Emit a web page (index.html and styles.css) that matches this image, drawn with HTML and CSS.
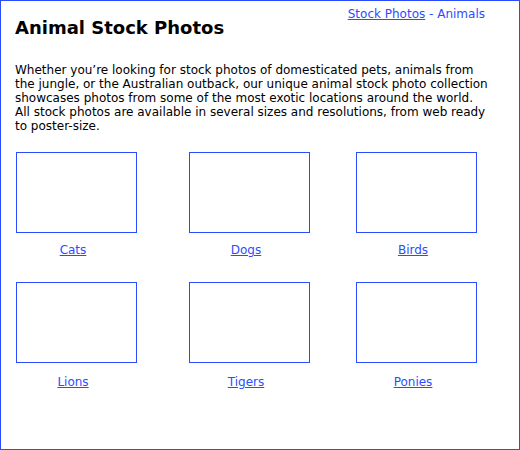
FILE: index.html
```html
<!DOCTYPE html>
<html lang="en">
<head>
  <meta charset="UTF-8" />
  <title>Animal Stock Photos</title>
  <link rel="stylesheet" href="styles.css">
</head>
<body>
  <div class="page">
    <div class="header">
      <h1>Animal Stock Photos</h1>
      <div class="crumbs"><a href="#">Stock Photos</a> - Animals</div>
    </div>

    <p class="intro">Whether you&rsquo;re looking for stock photos of domesticated pets, animals from the jungle, or the Australian outback, our unique animal stock photo collection showcases photos from some of the most exotic locations around the world. All stock photos are available in several sizes and resolutions, from web ready to poster-size.</p>

    <div class="gallery">
      <div class="item"><div class="thumb"></div><a href="#">Cats</a></div>
      <div class="item"><div class="thumb"></div><a href="#">Dogs</a></div>
      <div class="item"><div class="thumb"></div><a href="#">Birds</a></div>
      <div class="item lower"><div class="thumb"></div><a href="#">Lions</a></div>
      <div class="item lower"><div class="thumb"></div><a href="#">Tigers</a></div>
      <div class="item lower"><div class="thumb"></div><a href="#">Ponies</a></div>
    </div>
  </div>
</body>
</html>
```

FILE: styles.css
```css
:root {
  --blue: #2b4cff;
  --text: #000;
}

html, body {
  margin: 0;
  padding: 0;
}

body {
  font-family: "DejaVu Sans", Verdana, sans-serif;
  font-size: 12px;
  color: var(--text);
  background: #fff;
}

a {
  color: var(--blue);
}

.page {
  box-sizing: border-box;
  width: 520px;
  height: 450px;
  border: 1px solid var(--blue);
  padding: 0 28px 0 14px;
}

.header {
  display: flex;
  justify-content: space-between;
  align-items: flex-start;
}

h1 {
  font-size: 18px;
  font-weight: bold;
  margin: 16px 0 0;
}

.crumbs {
  color: var(--blue);
  margin: 6px 6px 0 0;
}

.intro {
  margin: 25px 0 0;
  line-height: 14px;
}

.gallery {
  display: grid;
  grid-template-columns: 173px 167px 121px;
  row-gap: 25px;
  margin: 19px 0 0 1px;
}

.item {
  display: flex;
  flex-direction: column;
  width: 121px;
}

.thumb {
  box-sizing: border-box;
  width: 121px;
  height: 81px;
  border: 1px solid var(--blue);
}

.item a {
  align-self: center;
  margin: 10px 7px 0 0;
}

.item.lower a {
  margin-top: 12px;
}
```
